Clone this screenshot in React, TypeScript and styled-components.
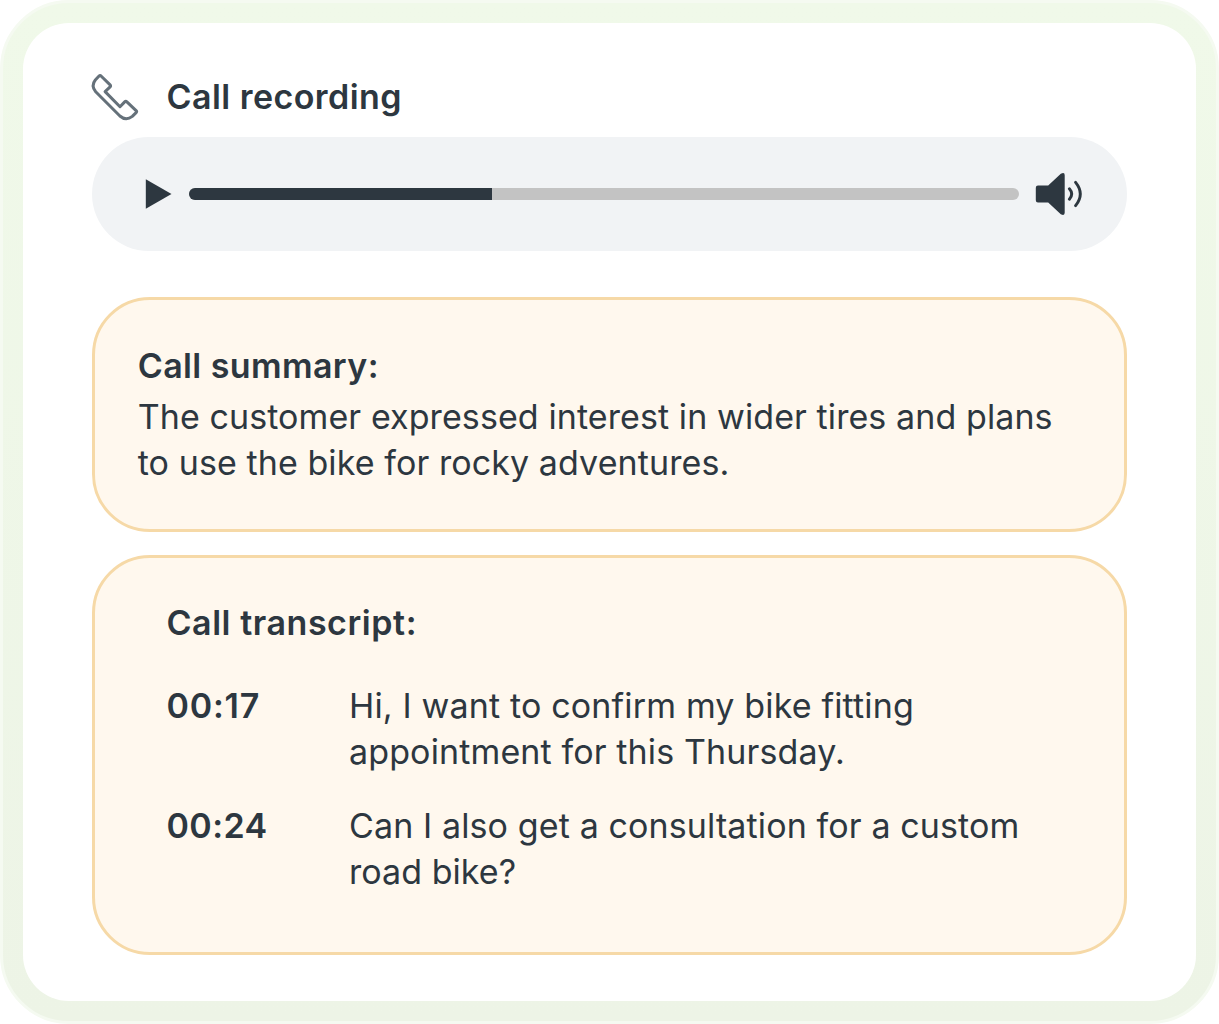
import styled, { createGlobalStyle } from "styled-components";

const GlobalStyle = createGlobalStyle`
    * {
        box-sizing: border-box;
    }
    body {
        margin: 0;
        background: #ffffff;
        color: #2d3740;
        font-family: Inter, "Liberation Sans", sans-serif;
        font-size: 34px;
        line-height: 46px;
    }
`;

const Frame = styled.div`
    width: 1219px;
    height: 1024px;
    padding: 20px;
    border: 3px solid #f5faf1;
    border-radius: 69px;
    background: linear-gradient(180deg, #f0f9e9 0%, #edf4e6 100%);
`;

const Panel = styled.main`
    width: 1173px;
    height: 978px;
    padding: 50px 69px 0 68.5px;
    border-radius: 46px;
    background: #ffffff;
`;

const Header = styled.header`
    display: flex;
    align-items: center;
    gap: 28px;
    height: 48px;
`;

const Title = styled.h2<{ $spacing: number }>`
    margin: 0;
    font-size: 34px;
    font-weight: 600;
    letter-spacing: ${(props) => props.$spacing}px;
    white-space: nowrap;
`;

const Player = styled.div`
    display: flex;
    align-items: center;
    width: 1035.5px;
    height: 114px;
    margin-top: 16.4px;
    padding-left: 53px;
    border-radius: 57px;
    background: #f1f3f5;
`;

const Track = styled.div`
    width: 830px;
    height: 12px;
    margin: 0 16px 0 17px;
    border-radius: 6px;
    background: #c3c3c3;
    overflow: hidden;
`;

const Progress = styled.div`
    height: 100%;
    background: #2d3740;
`;

const Box = styled.section<{ $height: number; $indent: number; $gap: number }>`
    width: 1035.5px;
    height: ${(props) => props.$height}px;
    margin-top: ${(props) => props.$gap}px;
    padding: 42.5px 0 0 ${(props) => props.$indent}px;
    border: 3px solid #f6d9a7;
    border-radius: 58px;
    background: #fff8ee;
`;

const Text = styled.p<{ $spacing: number }>`
    margin: 0;
    letter-spacing: ${(props) => props.$spacing}px;
    white-space: nowrap;
`;

const Summary = styled.div`
    padding-top: 5px;
`;

const Rows = styled.div`
    display: flex;
    flex-direction: column;
    gap: 28px;
    padding-top: 37px;
`;

const Row = styled.div`
    display: grid;
    grid-template-columns: 182.5px 1fr;
`;

const Time = styled.time<{ $spacing: number }>`
    font-weight: 600;
    letter-spacing: ${(props) => props.$spacing}px;
`;

const PhoneIcon = () => (
    <svg width="47" height="48" viewBox="0.9 0.4 47 48" fill="none" stroke="#65717a" strokeWidth="3" strokeLinejoin="round" overflow="visible">
        <path d="M4.2 7.4 7.7 3.7Q9 2.5 10.2 3.7L19 12.3Q20 13.3 19 14.3L14 19 28.9 34.1 33.6 29.3Q34.7 28.2 35.8 29.3L45 38Q46 39 45 40L41.2 43.8Q34.8 48.6 28.8 43.4L4.6 19.2Q-.4 13.2 4.2 7.4Z" />
    </svg>
);

const PlayIcon = () => (
    <svg width="27" height="30" viewBox="0 0 27 30" fill="#2d3740">
        <path d="M0.8 0.2 26.5 15 0.8 29.8Z" />
    </svg>
);

const VolumeIcon = () => (
    <svg width="48" height="44" viewBox="0 0 48 44" fill="none" stroke="#2d3740" strokeWidth="2.9" strokeLinecap="round">
        <path d="M3 13.5H13.2L25.8 1.8Q29.7-.2 29.7 3.2V40.8Q29.7 44.2 25.8 42.2L13.2 30.5H3Q.8 30.5.8 28.3V15.7Q.8 13.5 3 13.5Z" fill="#2d3740" stroke="none" />
        <path d="M34.4 16.8Q39 22 34.4 27.2M40.6 10.3Q50 22 40.6 33.7" />
    </svg>
);

const transcript = [
    { time: "00:17", timeSpacing: 0.8, lines: ["Hi, I want to confirm my bike fitting", "appointment for this Thursday."], spacing: [0.16, 0.13] },
    { time: "00:24", timeSpacing: 0.4, lines: ["Can I also get a consultation for a custom", "road bike?"], spacing: [0.12, 0.05] },
];

function App() {
    const played = 36.6;

    return <>
        <GlobalStyle />
        <Frame>
            <Panel>
                <Header>
                    <PhoneIcon />
                    <Title $spacing={0.45}>Call recording</Title>
                </Header>
                <Player>
                    <PlayIcon />
                    <Track>
                        <Progress style={{ width: `${played}%` }} />
                    </Track>
                    <VolumeIcon />
                </Player>
                <Box $height={234.5} $indent={43.2} $gap={45.8}>
                    <Title $spacing={0.4}>Call summary:</Title>
                    <Summary>
                        <Text $spacing={0.09}>The customer expressed interest in wider tires and plans</Text>
                        <Text $spacing={0.09}>to use the bike for rocky adventures.</Text>
                    </Summary>
                </Box>
                <Box $height={400} $indent={72} $gap={23}>
                    <Title $spacing={0.55}>Call transcript:</Title>
                    <Rows>
                        {transcript.map((item) => (
                            <Row key={item.time}>
                                <Time $spacing={item.timeSpacing}>{item.time}</Time>
                                <div>
                                    {item.lines.map((line, index) => <Text $spacing={item.spacing[index]} key={line}>{line}</Text>)}
                                </div>
                            </Row>
                        ))}
                    </Rows>
                </Box>
            </Panel>
        </Frame>
    </>
}
export default App;
